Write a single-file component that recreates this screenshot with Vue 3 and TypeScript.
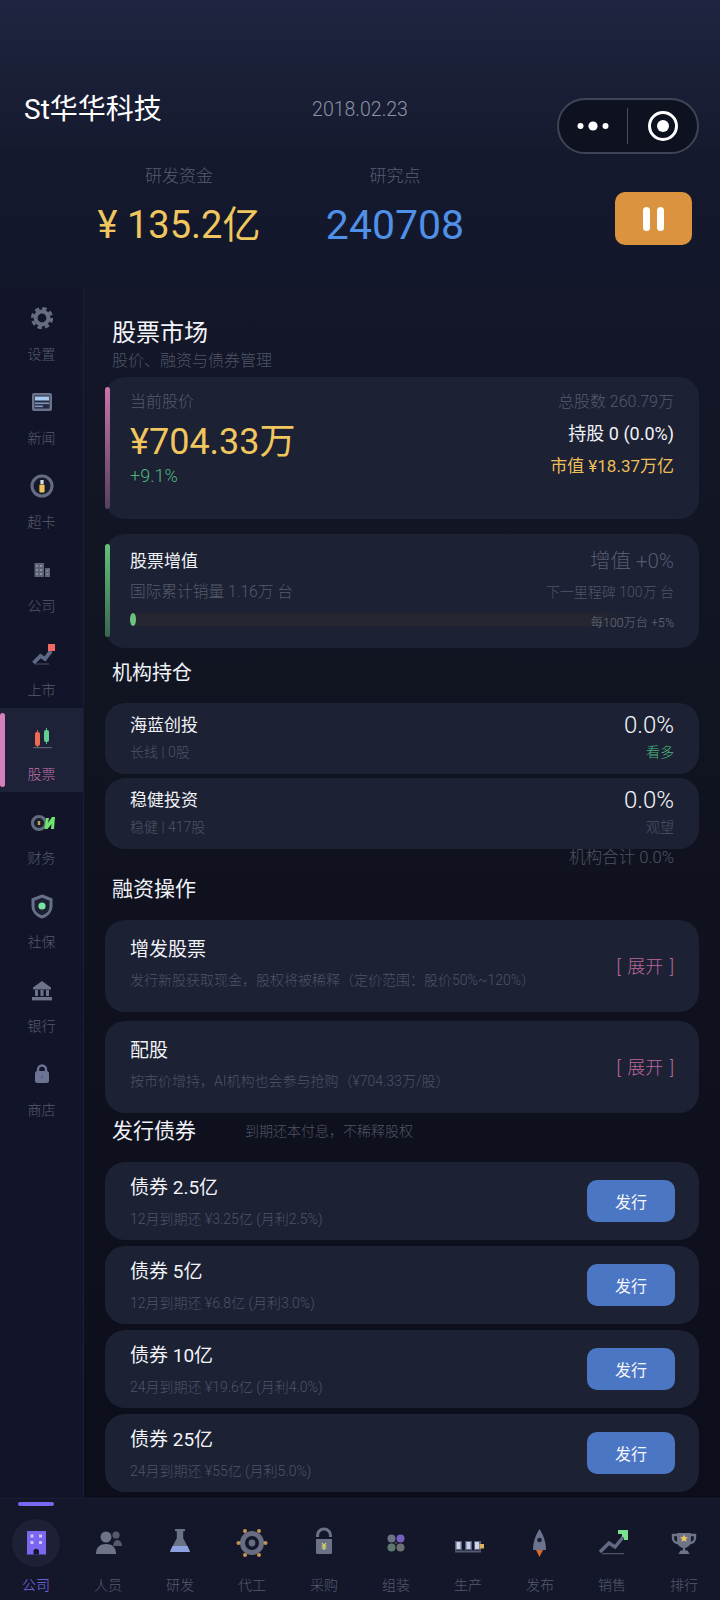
<template>
  <div class="page">
    <header class="head">
      <div class="head-top">
        <span class="co-name">St华华科技</span>
        <span class="co-date">2018.02.23</span>
      </div>
      <div class="stats">
        <div class="stat">
          <span class="stat-label">研发资金</span>
          <span class="stat-value money">¥ 135.2亿</span>
        </div>
        <div class="stat">
          <span class="stat-label">研究点</span>
          <span class="stat-value points">240708</span>
        </div>
        <button class="pause"><i></i><i></i></button>
      </div>
      <div class="capsule">
        <svg class="cap-dots" width="32" height="12" viewBox="0 0 32 12">
          <circle cx="3.500" cy="6" r="3" fill="#fff" />
          <circle cx="16" cy="6" r="4.600" fill="#fff" />
          <circle cx="28.500" cy="6" r="3" fill="#fff" />
        </svg>
        <span class="cap-line"></span>
        <svg width="32" height="32" viewBox="0 0 32 32">
          <circle cx="16" cy="16" r="13.500" fill="none" stroke="#fff" stroke-width="3" />
          <circle cx="16" cy="16" r="6" fill="#fff" />
        </svg>
      </div>
    </header>

    <div class="body">
      <aside class="side">
        <div v-for="item in sideItems" :key="item.label" class="side-item" :class="{ on: item.label === '股票' }">
          <svg width="32" height="32" viewBox="0 0 32 32" v-html="sideIcons[item.icon]"></svg>
          <span>{{ item.label }}</span>
        </div>
      </aside>

      <main class="main">
        <h1 class="title">股票市场</h1>
        <p class="subtitle">股价、融资与债券管理</p>

        <section class="card price-card">
          <span class="bar pink"></span>
          <div>
            <div class="dim16">当前股价</div>
            <div class="price">¥704.33万</div>
            <div class="change">+9.1%</div>
          </div>
          <div class="price-right">
            <div class="dim16 shares">总股数 260.79万</div>
            <div class="hold">持股 0 (0.0%)</div>
            <div class="cap">市值 ¥18.37万亿</div>
          </div>
        </section>

        <section class="card boost-card">
          <span class="bar green"></span>
          <div class="row boost-top">
            <span class="boost-name">股票增值</span>
            <span class="boost-val">增值 +0%</span>
          </div>
          <div class="row boost-mid">
            <span class="dim16 sold">国际累计销量 1.16万 台</span>
            <span class="dim14">下一里程碑 100万 台</span>
          </div>
          <div class="track">
            <span class="fill" :style="{ width: boostWidth + 'px' }"></span>
            <span class="track-note">每100万台 +5%</span>
          </div>
        </section>

        <h2 class="sec inst-sec">机构持仓</h2>
        <div class="inst-list">
          <section v-for="inst in institutions" :key="inst.name" class="card inst">
            <div class="row">
              <span class="inst-name">{{ inst.name }}</span>
              <span class="inst-pct">{{ inst.pct }}</span>
            </div>
            <div class="row inst-sub">
              <span class="dim14">{{ inst.desc }}</span>
              <span class="dim14" :class="{ bull: inst.view === '看多' }">{{ inst.view }}</span>
            </div>
          </section>
        </div>
        <div class="inst-total">机构合计 0.0%</div>

        <h2 class="sec fin-sec">融资操作</h2>
        <div class="fin-list">
          <section v-for="op in financing" :key="op.name" class="card fin">
            <div>
              <div class="fin-name">{{ op.name }}</div>
              <div class="dim14 fin-desc">{{ op.desc }}</div>
            </div>
            <span class="expand">[ 展开 ]</span>
          </section>
        </div>

        <div class="bond-head">
          <h2 class="sec">发行债券</h2>
          <span class="dim14 bond-note">到期还本付息，不稀释股权</span>
        </div>
        <div class="bond-list">
          <section v-for="bond in bonds" :key="bond.name" class="card bond">
            <div>
              <div class="bond-name">{{ bond.name }}</div>
              <div class="dim14 bond-desc">{{ bond.desc }}</div>
            </div>
            <button class="issue">发行</button>
          </section>
        </div>
      </main>
    </div>

    <nav class="tabs">
      <span class="tab-mark"></span>
      <div v-for="(tab, i) in tabItems" :key="tab.label" class="tab" :class="{ on: i === 0 }">
        <svg width="48" height="48" viewBox="0 0 48 48" v-html="tabIcons[tab.icon]"></svg>
        <span>{{ tab.label }}</span>
      </div>
    </nav>
  </div>
</template>

<script setup lang="ts">
const boostWidth = 6

const sideItems = [
  { label: '设置', icon: 'gear' },
  { label: '新闻', icon: 'news' },
  { label: '超卡', icon: 'card' },
  { label: '公司', icon: 'office' },
  { label: '上市', icon: 'ipo' },
  { label: '股票', icon: 'candle' },
  { label: '财务', icon: 'finance' },
  { label: '社保', icon: 'shield' },
  { label: '银行', icon: 'bank' },
  { label: '商店', icon: 'shop' },
]

const tabItems = [
  { label: '公司', icon: 'company' },
  { label: '人员', icon: 'people' },
  { label: '研发', icon: 'flask' },
  { label: '代工', icon: 'factory' },
  { label: '采购', icon: 'buy' },
  { label: '组装', icon: 'parts' },
  { label: '生产', icon: 'line' },
  { label: '发布', icon: 'rocket' },
  { label: '销售', icon: 'sales' },
  { label: '排行', icon: 'cup' },
]

const institutions = [
  { name: '海蓝创投', desc: '长线 | 0股', pct: '0.0%', view: '看多' },
  { name: '稳健投资', desc: '稳健 | 417股', pct: '0.0%', view: '观望' },
]

const financing = [
  { name: '增发股票', desc: '发行新股获取现金，股权将被稀释（定价范围：股价50%~120%）' },
  { name: '配股', desc: '按市价增持，AI机构也会参与抢购（¥704.33万/股）' },
]

const bonds = [
  { name: '债券 2.5亿', desc: '12月到期还 ¥3.25亿 (月利2.5%)' },
  { name: '债券 5亿', desc: '12月到期还 ¥6.8亿 (月利3.0%)' },
  { name: '债券 10亿', desc: '24月到期还 ¥19.6亿 (月利4.0%)' },
  { name: '债券 25亿', desc: '24月到期还 ¥55亿 (月利5.0%)' },
]

const sideIcons: Record<string, string> = {
  gear: `<circle cx="16" cy="16" r="9.600" fill="none" stroke="#666c81" stroke-width="3" stroke-dasharray="4.400 3.140"/>
    <circle cx="16" cy="16" r="6.400" fill="none" stroke="#666c81" stroke-width="4"/>`,
  news: `<rect x="6" y="7" width="20" height="18" rx="2" fill="#6b7289"/>
    <rect x="8.500" y="9.500" width="15" height="13" fill="#232a44"/>
    <rect x="9" y="10.500" width="14" height="4" fill="#a6c8ee"/>
    <rect x="9" y="16.500" width="14" height="1.600" fill="#8496b8"/>
    <rect x="9" y="19.500" width="8" height="1.600" fill="#8496b8"/>`,
  card: `<circle cx="16" cy="16" r="10" fill="#171b2e" stroke="#666c82" stroke-width="3"/>
    <rect x="14.400" y="10" width="3.200" height="4" fill="#d9dde6"/>
    <rect x="13.400" y="14.500" width="5.200" height="8" rx="1" fill="#f0c45a"/>`,
  office: `<rect x="8.500" y="9" width="9.500" height="14" fill="#5d6274"/><rect x="19" y="14" width="5" height="9" fill="#5d6274"/>
    <path d="M10 11h2v2h-2zM14 11h2v2h-2zM10 15h2v2h-2zM14 15h2v2h-2zM10 19h2v2h-2zM14 19h2v2h-2zM20.500 16h2v1.600h-2zM20.500 19.500h2v1.600h-2z" fill="#8b90a0"/>`,
  ipo: `<path d="M7.500 25l7-7 4.500 3 6-8" fill="none" stroke="#5d6a85" stroke-width="3.800"/>
    <rect x="22" y="6" width="7" height="7" fill="#ef6a62"/><rect x="9" y="25.500" width="14" height="1" fill="#4a5063"/>`,
  candle: `<rect x="11" y="8" width="1" height="18" fill="#c76250"/><rect x="20" y="6" width="1" height="16" fill="#59b57f"/>
    <rect x="9" y="10" width="5" height="14" rx="2" fill="#ee6a50"/><rect x="18" y="8" width="5" height="12" rx="2" fill="#62d093"/>
    <rect x="7" y="25" width="19" height="1.200" fill="#5b6173"/>`,
  finance: `<circle cx="13" cy="17" r="6.600" fill="#1a1d2c" stroke="#656b7f" stroke-width="3"/>
    <rect x="11.800" y="15" width="2.400" height="4" fill="#c2a252"/>
    <path d="M20 12h3l-1 5 4-6h3l-1 12-3 0 .5-5-4 5h-3z" fill="#6ee66d"/>`,
  shield: `<path d="M16 6l9 3.500v7c0 5-4 9-9 10.500-5-1.500-9-5.500-9-10.500v-7z" fill="#1b2034" stroke="#667086" stroke-width="3"/>
    <circle cx="16" cy="16" r="3.600" fill="#78e3a0"/>`,
  bank: `<path d="M16 7l9 6.500v2h-18v-2z" fill="#6d7389"/><path d="M9 16h3v6h-3zM14.500 16h3v6h-3zM20 16h3v6h-3z" fill="#6d7389"/>
    <rect x="6" y="23" width="20" height="3.400" fill="#6d7389"/>`,
  shop: `<path d="M12 14v-2.500a4 4 0 0 1 8 0v2.500" fill="none" stroke="#6d7392" stroke-width="2.400"/>
    <rect x="9" y="13" width="14" height="12" rx="2.500" fill="#6d7392"/><rect x="15.300" y="17.500" width="1.400" height="3" fill="#565d7c"/>`,
}

const tabIcons: Record<string, string> = {
  company: `<circle cx="24" cy="24" r="24" fill="#1e2136"/>
    <rect x="15" y="12" width="19" height="23.500" fill="#7b66f0"/>
    <path d="M18.500 15.500h3v3h-3zM27 15.500h3v3h-3zM18.500 22h3v3h-3zM27 22h3v3h-3z" fill="#cfc6fa"/>
    <path d="M21.500 35.500v-4a3 3 0 0 1 5.500 0v4z" fill="#15182a"/>`,
  people: `<circle cx="22" cy="18" r="5.500" fill="#6d7488"/><path d="M12 35c0-7 4-10 10-10s10 3 10 10z" fill="#6d7488"/>
    <circle cx="32" cy="16" r="3.600" fill="#54596b"/><path d="M29 27c.5-4 2-6 4-6s5 1.500 5 6z" fill="#54596b"/>`,
  flask: `<path d="M19 10h10v2.200h-1.800v7l6.800 13h-20l6.800-13v-7h-1.800z" fill="#6b7185"/>
    <path d="M16.500 27h15l2.500 6h-20z" fill="#8ea2e0"/>`,
  factory: `<circle cx="24" cy="24" r="9.500" fill="none" stroke="#686d81" stroke-width="5"/>
    <circle cx="24" cy="24" r="3.400" fill="#686d81"/>
    <g fill="#c4934f"><circle cx="17" cy="12" r="2"/><circle cx="31" cy="12" r="2"/><circle cx="10.500" cy="24" r="2"/><circle cx="37.500" cy="24" r="2"/><circle cx="17" cy="36" r="2"/><circle cx="31" cy="36" r="2"/></g>`,
  buy: `<path d="M17.500 18v-1.500a6.500 6.500 0 0 1 13 0v1.500" fill="none" stroke="#6c7286" stroke-width="3"/>
    <path d="M16 20h16v13.500a1.500 1.500 0 0 1-1.500 1.500h-13a1.500 1.500 0 0 1-1.500-1.500z" fill="#6c7286"/>
    <path d="M22 24l2 2.500 2-2.500M21.500 27h5M21.500 29h5M24 26.500v4.500" fill="none" stroke="#dbd76c" stroke-width="1.200"/>`,
  parts: `<circle cx="19.500" cy="19.500" r="4" fill="#6d7386"/><circle cx="28.500" cy="19.500" r="4" fill="#7560c0"/>
    <circle cx="19.500" cy="28.500" r="4" fill="#5d7a70"/><circle cx="28.500" cy="28.500" r="4" fill="#6d6f72"/>
    <path d="M24 22.500v3M22.500 24h3" stroke="#4b4f5d" stroke-width="1"/>`,
  line: `<rect x="11" y="31.500" width="26" height="2" fill="#555b6e"/>
    <g fill="#5c6278"><rect x="11" y="22" width="7" height="9"/><rect x="21" y="22" width="7" height="9"/><rect x="30" y="22" width="7" height="9"/></g>
    <g fill="#ccd3f2"><rect x="12.500" y="23" width="4" height="7"/><rect x="22.500" y="23" width="4" height="7"/><rect x="31" y="23" width="4" height="7"/></g>
    <rect x="35.500" y="25" width="4.500" height="4.500" fill="#d9b25a"/>`,
  rocket: `<path d="M23.500 10c3 4.500 6.500 12 6.500 21h-13c0-9 3.500-16.500 6.500-21z" fill="#6b7390"/>
    <circle cx="23.500" cy="21" r="2.300" fill="#1a1e33"/>
    <path d="M20 31h7l-3.500 7z" fill="#d9662c"/>`,
  sales: `<path d="M12 33l9-9 6 4 9-11" fill="none" stroke="#626980" stroke-width="3.400"/>
    <path d="M30 11h10v10h-4v-6h-6z" fill="#79e08c"/><rect x="34" y="13" width="5" height="5" fill="#79e08c"/>
    <rect x="14" y="34" width="22" height="1.200" fill="#4e5468"/>`,
  cup: `<path d="M17 14h14v8a7 7 0 0 1-14 0z" fill="#6d7388"/>
    <path d="M17 16h-4v3a5 5 0 0 0 5 5M31 16h4v3a5 5 0 0 1-5 5" fill="none" stroke="#6d7388" stroke-width="2.400"/>
    <rect x="22.800" y="28" width="2.400" height="4" fill="#6d7388"/><path d="M18.500 35l2-3.500h7l2 3.500z" fill="#6d7388"/>
    <path d="M24 15.500l1.200 2.500 2.700.3-2 1.800.6 2.700-2.500-1.400-2.500 1.400.6-2.700-2-1.800 2.700-.3z" fill="#eec45d"/>`,
}
</script>

<style>
body {
  background: #10131f;
}
</style>

<style scoped>
* {
  box-sizing: border-box;
}

.page {
  width: 720px;
  height: 1600px;
  display: flex;
  flex-direction: column;
  overflow: hidden;
  position: relative;
  font-family: Roboto, "Noto Sans CJK SC", sans-serif;
  font-weight: 400;
  color: #eef0f6;
  background: #10131f;
}

.head {
  height: 288px;
  flex-shrink: 0;
  background: linear-gradient(180deg, #161b33, #13172a);
}

.head-top {
  height: 150px;
  padding: 95px 24px 0;
  display: grid;
  grid-template-columns: 1fr auto 1fr;
  align-items: center;
  align-content: start;
  background: linear-gradient(180deg, #1f2540, #151a2f);
}

.co-name {
  font-size: 28px;
  line-height: 30px;
  color: #fff;
}

.co-date {
  font-size: 19.5px;
  line-height: 30px;
  font-weight: 300;
  color: #8c92a6;
}

.capsule {
  position: absolute;
  left: 557px;
  top: 98px;
  width: 142px;
  height: 56px;
  border: 2px solid #3f4454;
  border-radius: 28px;
  background: #0e1120;
  display: flex;
  align-items: center;
  padding-left: 18px;
}

.cap-line {
  width: 1px;
  height: 36px;
  margin: 0 19px 0 18px;
  background: #4a4e5c;
}

.stats {
  display: flex;
  padding: 14px 28px 0 71px;
}

.stat {
  width: 216px;
  display: flex;
  flex-direction: column;
  align-items: center;
}

.stat-label {
  font-size: 17px;
  line-height: 24px;
  font-weight: 300;
  color: #585d72;
}

.stat-value {
  margin-top: 15px;
  line-height: 44px;
}

.money {
  font-size: 38px;
  color: #f0c65e;
}

.points {
  font-size: 41px;
  color: #4f90e8;
}

.pause {
  margin: 28px 0 0 auto;
  width: 77px;
  height: 53px;
  border: none;
  border-radius: 10px;
  background: #dc933f;
  display: flex;
  align-items: center;
  justify-content: center;
  gap: 7px;
}

.pause i {
  width: 7px;
  height: 24px;
  border-radius: 3.5px;
  background: #fff;
}

.body {
  flex: 1;
  display: flex;
  min-height: 0;
}

.side {
  width: 84px;
  flex-shrink: 0;
  background: #12152a;
  border-right: 1px solid #1a1e30;
}

.side-item {
  height: 84px;
  position: relative;
  padding-top: 14px;
  display: flex;
  flex-direction: column;
  align-items: center;
}

.side-item span {
  margin-top: 10px;
  font-size: 14px;
  line-height: 20px;
  font-weight: 300;
  color: #555a6e;
}

.side-item.on {
  background: #1d2239;
}

.side-item.on::before {
  content: "";
  position: absolute;
  left: 0;
  top: 5px;
  width: 5px;
  height: 74px;
  border-radius: 3px;
  background: #d67fbd;
}

.side-item.on span {
  color: #c06fa8;
}

.main {
  flex: 1;
  min-width: 0;
  padding: 30px 21px 0 21px;
  background: linear-gradient(180deg, #131728, #10131f 45%, #0c0e1b);
}

.title {
  margin: 0 0 0 7px;
  font-size: 24px;
  line-height: 30px;
  font-weight: 400;
  color: #f4f5fa;
}

.subtitle {
  margin: 3px 0 0 7px;
  font-size: 16px;
  line-height: 20px;
  font-weight: 300;
  color: #4f5468;
}

.card {
  position: relative;
  border-radius: 20px;
  background: #1c2133;
  padding-left: 25px;
  padding-right: 25px;
}

.bar {
  position: absolute;
  left: 0;
  width: 5px;
  border-radius: 3px;
}

.bar.pink {
  top: 10px;
  bottom: 10px;
  background: linear-gradient(180deg, #c974ab, #55405f);
}

.bar.green {
  top: 10px;
  bottom: 11px;
  background: linear-gradient(180deg, #62c07a, #3b6650);
}

.row {
  display: flex;
  justify-content: space-between;
  align-items: center;
}

.dim16 {
  font-size: 16px;
  line-height: 22px;
  font-weight: 300;
  color: #555a6e;
}

.sold {
  font-size: 15.7px;
}

.dim14 {
  font-size: 14px;
  line-height: 20px;
  font-weight: 300;
  color: #4f5468;
}

.price-card {
  margin-top: 6px;
  height: 142px;
  padding-top: 14px;
  display: flex;
  justify-content: space-between;
}

.price {
  margin-top: 8px;
  font-size: 36px;
  line-height: 43px;
  color: #f0c65e;
}

.change {
  font-size: 18px;
  line-height: 24px;
  font-weight: 300;
  color: #4cb67f;
}

.price-right {
  text-align: right;
}

.hold {
  margin-top: 9px;
  font-size: 18px;
  line-height: 24px;
  color: #f2f3f8;
}

.cap {
  margin-top: 8px;
  font-size: 17px;
  line-height: 24px;
  color: #eebf58;
}

.boost-card {
  margin-top: 15px;
  height: 114px;
  padding-top: 14px;
}

.boost-name {
  font-size: 17px;
  line-height: 26px;
  color: #f2f3f8;
}

.boost-val {
  font-size: 20.5px;
  line-height: 26px;
  font-weight: 300;
  color: #555a6e;
}

.boost-mid {
  margin-top: 7px;
}

.track {
  position: relative;
  margin-top: 10px;
  height: 13px;
  border-radius: 7px;
  background: linear-gradient(90deg, #25262f 84%, #1c2133 94%);
}

.fill {
  display: block;
  height: 13px;
  border-radius: 3px / 6px;
  background: #6cc27c;
}

.track-note {
  position: absolute;
  right: 0;
  top: 1px;
  font-size: 12.3px;
  line-height: 18px;
  font-weight: 300;
  color: #6a6f82;
}

.sec {
  margin: 0;
  font-weight: 400;
  font-size: 21px;
  line-height: 28px;
  color: #f0f2f8;
}

.inst-sec {
  margin: 11px 0 0 7px;
  font-size: 20px;
}

.inst-list {
  margin-top: 16px;
  display: flex;
  flex-direction: column;
  gap: 4px;
}

.inst {
  height: 71px;
  padding-top: 9px;
}

.inst-name {
  font-size: 17px;
  line-height: 26px;
  color: #f2f3f8;
}

.inst-pct {
  font-size: 24px;
  line-height: 26px;
  font-weight: 300;
  color: #f4f5fa;
}

.inst-sub {
  margin-top: 4px;
}

.bull {
  color: #4cb67f;
}

.inst-total {
  height: 18px;
  padding-right: 25px;
  text-align: right;
  font-size: 16.6px;
  line-height: 18px;
  font-weight: 300;
  color: #4f5468;
}

.fin-sec {
  margin: 8px 0 0 7px;
}

.fin-list {
  margin-top: 17px;
  display: flex;
  flex-direction: column;
  gap: 9px;
}

.fin {
  height: 92px;
  padding-top: 16px;
  display: flex;
  justify-content: space-between;
}

.fin-name {
  font-size: 19px;
  line-height: 28px;
  color: #f2f3f8;
}

.fin-desc {
  margin-top: 6px;
}

.expand {
  margin-top: 17px;
  font-size: 18px;
  line-height: 28px;
  font-weight: 300;
  word-spacing: 2px;
  color: #b9679b;
}

.bond-head {
  margin: 4px 0 0 7px;
  display: flex;
  align-items: center;
}

.bond-note {
  margin-left: 49px;
}

.bond-list {
  margin-top: 17px;
  display: flex;
  flex-direction: column;
  gap: 6px;
}

.bond {
  height: 78px;
  padding-top: 12px;
  display: flex;
  justify-content: space-between;
}

.bond-name {
  font-size: 19px;
  line-height: 28px;
  color: #f2f3f8;
}

.bond-desc {
  margin-top: 7px;
}

.issue {
  margin: 6px -1px 0 0;
  width: 88px;
  height: 42px;
  border: none;
  border-radius: 10px;
  background: #4a76c4;
  color: #f2f5fb;
  font-family: inherit;
  font-size: 16px;
}

.tabs {
  position: relative;
  height: 102px;
  flex-shrink: 0;
  display: flex;
  padding-top: 20px;
  background: #14172a;
  border-top: 1px solid #1a1d31;
}

.tab-mark {
  position: absolute;
  left: 18px;
  top: 3px;
  width: 36px;
  height: 4px;
  border-radius: 2px;
  background: #7b66f0;
}

.tab {
  width: 72px;
  display: flex;
  flex-direction: column;
  align-items: center;
}

.tab span {
  margin-top: 8px;
  font-size: 14px;
  line-height: 20px;
  font-weight: 300;
  color: #555a6e;
}

.tab.on span {
  color: #7f6cf0;
}
</style>
